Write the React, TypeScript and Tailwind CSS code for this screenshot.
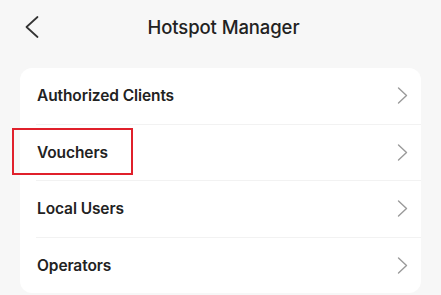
const items = ["Authorized Clients", "Vouchers", "Local Users", "Operators"];

export default function App() {
  return (
    <div className="min-h-screen w-full bg-[#f7f7f7] font-['Inter',sans-serif] text-[#222]">
      {/* Header */}
      <div className="relative flex h-[55px] items-center justify-center pl-[6px]">
        <button className="absolute left-[25px] top-[16px] text-[#333]">
          <svg width="14" height="22" viewBox="0 0 14 22" fill="none">
            <polyline points="12.5,1 1.5,11 12.5,21" stroke="currentColor" strokeWidth="1.7" strokeLinecap="round" strokeLinejoin="round" />
          </svg>
        </button>
        <h1 className="text-[18.5px] font-medium tracking-[-0.1px]">Hotspot Manager</h1>
      </div>

      {/* List */}
      <div className="mx-5 mt-[13px] rounded-xl bg-white">
        {items.map((label, i) => (
          <div key={label} className="relative">
            {i > 0 && <div className="ml-4 h-px bg-[#f2f2f2]" />}
            <div className="flex h-[55.5px] items-center justify-between pl-[17px] pr-[13px]">
              <span className="text-[15.5px] font-semibold tracking-[-0.1px]">{label}</span>
              <svg width="11" height="17" viewBox="0 0 11 17" fill="none" className="text-[#9a9a9a]">
                <polyline points="1.5,1 9.5,8.5 1.5,16" stroke="currentColor" strokeWidth="1.4" strokeLinecap="round" strokeLinejoin="round" />
              </svg>
            </div>
            {label === "Vouchers" && (
              <div className="absolute left-[-8px] top-[4px] h-[47px] w-[121px] border-2 border-[#e0202b]" />
            )}
          </div>
        ))}
      </div>
    </div>
  );
}
